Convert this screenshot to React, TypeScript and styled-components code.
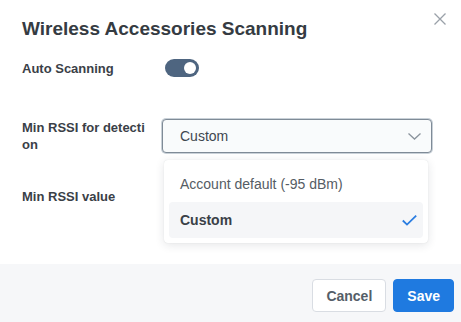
import * as React from "react";
import styled, { createGlobalStyle } from "styled-components";

const GlobalStyle = createGlobalStyle`
	html, body {
		margin: 0;
		padding: 0;
		background: #ffffff;
	}
	body {
		font-family: "Liberation Sans", Arial, sans-serif;
	}
`;

const Dialog = styled.div`
	width: 461px;
	height: 322px;
	display: flex;
	flex-direction: column;
	background: #ffffff;
	overflow: hidden;
`;

const Header = styled.div`
	display: flex;
	justify-content: space-between;
	align-items: flex-start;
	padding: 0 0 0 22px;
	height: 44px;
`;

const Title = styled.h2`
	margin: 19px 0 0;
	font-size: 19px;
	line-height: 20px;
	font-weight: 700;
	color: #353b42;
`;

const CloseButton = styled.button`
	border: none;
	background: none;
	padding: 0;
	margin: 13px 15px 0 0;
	width: 12px;
	height: 12px;
	display: flex;
	cursor: pointer;
`;

const Body = styled.div`
	flex: 1;
	display: flex;
	flex-direction: column;
	padding: 0 22px;
`;

const Row = styled.div<{ $mt: number; $h: number }>`
	display: grid;
	grid-template-columns: 140px 270px;
	align-items: center;
	margin-top: ${(p) => p.$mt}px;
	min-height: ${(p) => p.$h}px;
`;

const Label = styled.label`
	font-size: 13px;
	line-height: 17px;
	font-weight: 700;
	color: #3a4047;
	width: 128px;
	word-break: break-all;
`;

const Toggle = styled.div<{ $on: boolean }>`
	width: 34px;
	height: 18px;
	border-radius: 9px;
	margin-left: 3px;
	background: ${(p) => (p.$on ? "#4e6580" : "#c4cbd3")};
	display: flex;
	align-items: center;
	justify-content: ${(p) => (p.$on ? "flex-end" : "flex-start")};
	padding: 0 3px;
	box-sizing: border-box;
	&::after {
		content: "";
		width: 12px;
		height: 12px;
		border-radius: 50%;
		background: #ffffff;
	}
`;

const SelectWrap = styled.div`
	position: relative;
`;

const SelectBox = styled.div`
	height: 34px;
	box-sizing: border-box;
	border: 1px solid #7f8b97;
	box-shadow: 0 0 0 1px #c9d1d8;
	border-radius: 4px;
	background: #f9fbfc;
	display: flex;
	align-items: center;
	justify-content: space-between;
	padding: 0 10px 0 17px;
	font-size: 14px;
	color: #3f4750;
`;

const Menu = styled.div`
	position: absolute;
	top: 41px;
	left: 2px;
	width: 264px;
	box-sizing: border-box;
	padding: 6px 5px 5px;
	background: #ffffff;
	border-radius: 4px;
	box-shadow: 0 2px 10px rgba(30, 40, 55, 0.12), 0 0 1px rgba(30, 40, 55, 0.15);
	z-index: 2;
`;

const Option = styled.div<{ $selected?: boolean }>`
	height: 36px;
	display: flex;
	align-items: center;
	justify-content: space-between;
	padding: 0 6px 0 11px;
	border-radius: 4px;
	font-size: 14px;
	font-weight: ${(p) => (p.$selected ? 700 : 400)};
	color: ${(p) => (p.$selected ? "#3a4047" : "#555c64")};
	background: ${(p) => (p.$selected ? "#f5f6f8" : "transparent")};
`;

const NumberInput = styled.div`
	height: 34px;
`;

const Footer = styled.div`
	height: 58px;
	background: #f6f7f9;
	display: flex;
	justify-content: flex-end;
	align-items: flex-start;
	gap: 7px;
	padding: 15px 7px 0 0;
	box-sizing: border-box;
`;

const Button = styled.button<{ $primary?: boolean }>`
	height: 33px;
	padding: 0 13px;
	border-radius: 4px;
	font-family: inherit;
	font-size: 14px;
	font-weight: 700;
	cursor: pointer;
	border: 1px solid ${(p) => (p.$primary ? "#1f7ae0" : "#d9dde3")};
	background: ${(p) => (p.$primary ? "#1f7ae0" : "#ffffff")};
	color: ${(p) => (p.$primary ? "#ffffff" : "#555e68")};
`;

const CloseIcon = () => (
	<svg width="12" height="12" viewBox="0 0 12 12" fill="none" stroke="#9aa1a9" strokeWidth="1.3">
		<path d="M0.5 0.5 L11.5 11.5 M11.5 0.5 L0.5 11.5" />
	</svg>
);

const Chevron = () => (
	<svg width="13" height="7" viewBox="0 0 13 7" fill="none" stroke="#8b949d" strokeWidth="1.3">
		<path d="M0.5 0.5 L6.5 6 L12.5 0.5" />
	</svg>
);

const Check = () => (
	<svg width="15" height="11" viewBox="0 0 15 11" fill="none" stroke="#2a7de1" strokeWidth="1.8">
		<path d="M0.8 5.5 L5 9.6 L14.2 0.7" />
	</svg>
);

const App: React.FC = () => {
	const [auto, setAuto] = React.useState(true);
	const options = ["Account default (-95 dBm)", "Custom"];
	const selected = "Custom";
	return (
		<>
			<GlobalStyle />
			<Dialog>
				<Header>
					<Title>Wireless Accessories Scanning</Title>
					<CloseButton aria-label="Close">
						<CloseIcon />
					</CloseButton>
				</Header>
				<Body>
					<Row $mt={14} $h={20}>
						<Label>Auto Scanning</Label>
						<Toggle $on={auto} onClick={() => setAuto(!auto)} />
					</Row>
					<Row $mt={41} $h={34}>
						<Label>Min RSSI for detection</Label>
						<SelectWrap>
							<SelectBox>
								{selected}
								<Chevron />
							</SelectBox>
							<Menu>
								{options.map((o) => (
									<Option key={o} $selected={o === selected}>
										{o}
										{o === selected && <Check />}
									</Option>
								))}
							</Menu>
						</SelectWrap>
					</Row>
					<Row $mt={26} $h={34}>
						<Label>Min RSSI value</Label>
						<NumberInput />
					</Row>
				</Body>
				<Footer>
					<Button>Cancel</Button>
					<Button $primary>Save</Button>
				</Footer>
			</Dialog>
		</>
	);
};

export default App;
